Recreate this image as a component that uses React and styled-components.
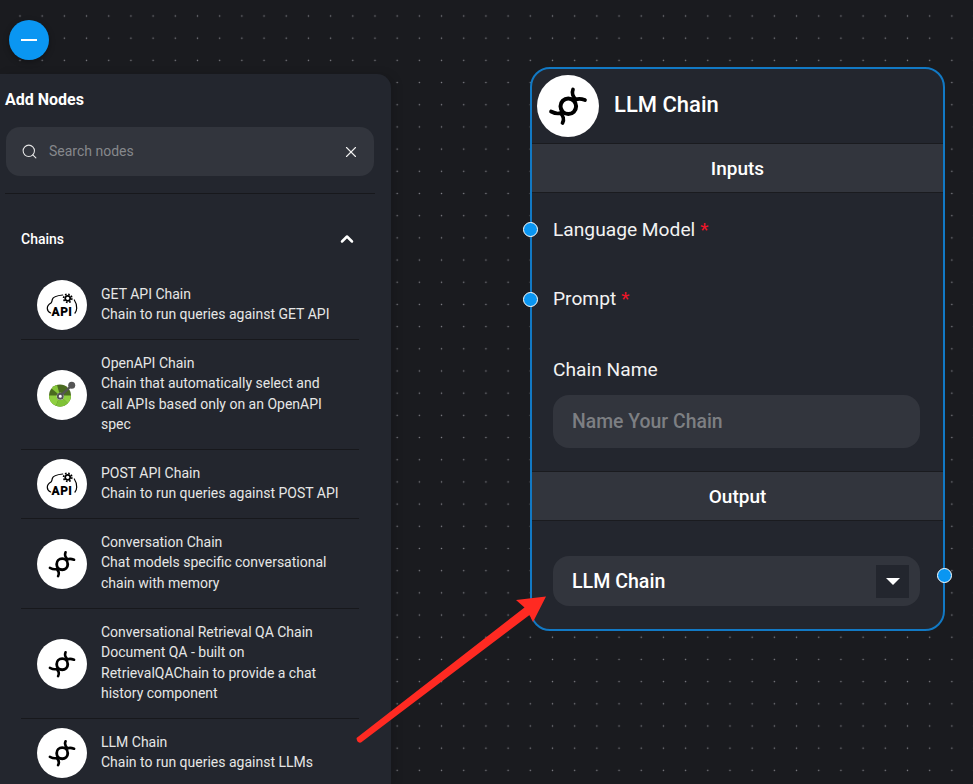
import styled, { createGlobalStyle } from "styled-components";
import { ChevronUp, Search, X } from "lucide-react";

const GlobalStyle = createGlobalStyle`
  html, body {
    margin: 0;
    padding: 0;
    background: #1a1b1f;
    font-family: Roboto, "Liberation Sans", sans-serif;
    overflow: hidden;
  }
  * {
    box-sizing: border-box;
  }
`;

const chains = [
  { id: 1, icon: "api", title: "GET API Chain", desc: ["Chain to run queries against GET API"], height: 69 },
  {
    id: 2,
    icon: "openapi",
    title: "OpenAPI Chain",
    desc: ["Chain that automatically select and", "call APIs based only on an OpenAPI", "spec"],
    height: 110,
  },
  { id: 3, icon: "api", title: "POST API Chain", desc: ["Chain to run queries against POST API"], height: 69 },
  {
    id: 4,
    icon: "chain",
    title: "Conversation Chain",
    desc: ["Chat models specific conversational", "chain with memory"],
    height: 90,
  },
  {
    id: 5,
    icon: "chain",
    title: "Conversational Retrieval QA Chain",
    desc: ["Document QA - built on", "RetrievalQAChain to provide a chat", "history component"],
    height: 110,
  },
  { id: 6, icon: "chain", title: "LLM Chain", desc: ["Chain to run queries against LLMs"], height: 69 },
];

const ChainGlyph = ({ size }) => (
  <svg width={size} height={size} viewBox="2 2 62 62" fill="none" stroke="#000" strokeLinecap="round">
    <circle cx="33.3" cy="33.3" r="7.8" strokeWidth="4" />
    <path
      d="M38 16.5C36.5 20 38 24 41 26.5M50 27C46 25.5 43 25.5 41 26.5M16 38.5C20 40.5 23 41 25.5 40M27.5 50C29.5 46.5 28 42.5 25.5 40"
      strokeWidth="3.7"
    />
  </svg>
);

const ApiGlyph = () => (
  <svg width="36" height="36" viewBox="0 0 36 36" fill="none" stroke="#000">
    <path d="M18.7 8C13 8.5 9 10 8.3 12.5C8 14.5 8 15 7 16C4.5 17.5 3.2 19.5 3.3 21.5C3.4 23.5 4.8 25.2 6.7 26" strokeWidth="1.2" strokeLinecap="round" />
    <path d="M30.3 13C32 15.5 32.9 18.5 32.7 21.3C32.6 23.2 32 25 31 26" strokeWidth="1.2" strokeLinecap="round" />
    <circle cx="23.7" cy="11.3" r="2.5" strokeWidth="1.7" />
    <circle cx="23.7" cy="11.3" r="4.1" strokeWidth="1.7" strokeDasharray="1.6 1.62" />
    <ApiLabel x="18" y="29" textAnchor="middle">API</ApiLabel>
  </svg>
);

const OpenApiGlyph = () => (
  <svg width="36" height="36" viewBox="0 0 36 36" fill="none">
    <circle cx="16" cy="18.5" r="11" fill="#4a6b20" />
    <path d="M16 18.5L5 18.5A11 11 0 0 0 12 28.8Z" fill="#8fd040" />
    <path d="M16 18.5L12 28.8A11 11 0 0 0 23.8 26.3Z" fill="#7fc236" />
    <path d="M16 18.5L23.8 26.3A11 11 0 0 0 27 18.5Z" fill="#8fd040" />
    <path d="M16 18.5L7.5 11.5A11 11 0 0 1 13 8Z" fill="#86c63a" />
    <circle cx="16.3" cy="19.3" r="3.6" fill="#fff" />
    <circle cx="16.3" cy="19.3" r="2.5" fill="#fff" stroke="#555" strokeWidth="2" />
    <path d="M18.2 17.4L26.5 9.5" stroke="#555" strokeWidth="2.4" />
    <circle cx="27.7" cy="8.3" r="3.5" fill="#555" />
  </svg>
);

const iconFor = (name) => {
  if (name === "api") return <ApiGlyph />;
  if (name === "openapi") return <OpenApiGlyph />;
  return <ChainGlyph size={44} />;
};

const App = () => {
  return (
    <>
      <GlobalStyle />
      <Canvas>
        <ToggleButton aria-label="Collapse">
          <Dash />
        </ToggleButton>

        <AddPanel>
          <PanelTitle>Add Nodes</PanelTitle>
          <SearchBox>
            <Search size={17} strokeWidth={1.5} color="#e6e6e6" />
            <SearchText>Search nodes</SearchText>
            <X size={18} strokeWidth={1.5} color="#f2f2f2" />
          </SearchBox>
          <PanelDivider />
          <GroupHeader>
            <span>Chains</span>
            <ChevronUp size={20} strokeWidth={3} color="#fff" />
          </GroupHeader>
          <ChainList>
            {chains.map(({ id, icon, title, desc, height }) => (
              <ChainRow key={id} $height={height}>
                <ChainAvatar>{iconFor(icon)}</ChainAvatar>
                <ChainText>
                  <ChainTitle>{title}</ChainTitle>
                  {desc.map((line) => (
                    <ChainDesc key={line}>{line}</ChainDesc>
                  ))}
                </ChainText>
              </ChainRow>
            ))}
          </ChainList>
        </AddPanel>

        <NodeCard>
          <NodeHeader>
            <NodeAvatar>
              <ChainGlyph size={62} />
            </NodeAvatar>
            <NodeTitle>LLM Chain</NodeTitle>
          </NodeHeader>

          <SectionBar>Inputs</SectionBar>
          <InputsBody>
            <AnchorRow>
              <Handle $top={27} />
              Language Model <Required>*</Required>
            </AnchorRow>
            <AnchorRow>
              <Handle $top={28} />
              Prompt <Required>*</Required>
            </AnchorRow>
            <FieldLabel>Chain Name</FieldLabel>
            <NameField>Name Your Chain</NameField>
          </InputsBody>

          <SectionBar>Output</SectionBar>
          <OutputBody>
            <SelectField>
              LLM Chain
              <CaretBox>
                <Caret />
              </CaretBox>
            </SelectField>
            <OutputHandle />
          </OutputBody>
        </NodeCard>

        <ArrowOverlay width="973" height="784" viewBox="0 0 973 784">
          <path
            d="M356.5 738L524.5 607.5L516 600L546 596.5L533 622L529.5 615L361 742.5Q357 743.5 356.5 738Z"
            fill="#ff2a22"
          />
        </ArrowOverlay>
      </Canvas>
    </>
  );
};

export default App;

const Canvas = styled.main`
  position: relative;
  width: 973px;
  height: 784px;
  overflow: hidden;
  background-color: #1a1b1f;
  background-image: radial-gradient(circle, #85858c 0.8px, transparent 1px);
  background-size: 22.2px 22.2px;
  background-position: 8.9px 4.9px;
`;

const ToggleButton = styled.button`
  position: absolute;
  left: 9px;
  top: 20px;
  display: flex;
  align-items: center;
  justify-content: center;
  width: 40px;
  height: 40px;
  padding: 0;
  border: none;
  border-radius: 50%;
  background: #0a96f2;
  box-shadow: 0 2px 6px rgba(0, 0, 0, 0.3);
`;

const Dash = styled.span`
  width: 16px;
  height: 2px;
  background: #fff;
`;

const AddPanel = styled.aside`
  position: absolute;
  left: 0;
  top: 74px;
  width: 391px;
  height: 710px;
  padding: 16px 16px 0 5px;
  overflow: hidden;
  border-radius: 0 14px 0 0;
  background: #23262e;
  box-shadow: 4px 0 10px rgba(0, 0, 0, 0.12);
`;

const PanelTitle = styled.h4`
  margin: 0;
  font-size: 16px;
  line-height: 19px;
  font-weight: 700;
  color: #fff;
`;

const SearchBox = styled.div`
  display: flex;
  align-items: center;
  width: 368px;
  height: 49px;
  margin: 18px 0 0 1px;
  padding: 0 14px 0 15px;
  border-radius: 14px;
  background: #32353d;
`;

const SearchText = styled.span`
  flex: 1;
  margin: -2px 0 0 11px;
  font-size: 14px;
  color: #86888c;
`;

const PanelDivider = styled.div`
  width: 370px;
  height: 1px;
  margin-top: 17px;
  background: #17181c;
`;

const GroupHeader = styled.div`
  display: flex;
  align-items: center;
  justify-content: space-between;
  width: 338px;
  height: 77px;
  margin-left: 16px;
  padding: 13px 2px 1px 0;
  font-size: 14px;
  font-weight: 500;
  color: #fff;
`;

const ChainList = styled.div`
  width: 338px;
  margin-left: 16px;
`;

const ChainRow = styled.div`
  display: flex;
  align-items: center;
  height: ${(props) => props.$height}px;
  padding-left: 16px;
  border-bottom: 1px solid #17181c;
`;

const ChainAvatar = styled.div`
  display: flex;
  flex: none;
  align-items: center;
  justify-content: center;
  width: 50px;
  height: 50px;
  border-radius: 50%;
  background: #fff;
`;

const ChainText = styled.div`
  margin-left: 14px;
  color: #e6e6e6;
`;

const ChainTitle = styled.div`
  font-size: 14px;
  line-height: 19px;
`;

const ChainDesc = styled.div`
  font-size: 14px;
  line-height: 20.6px;
`;

const ApiLabel = styled.text`
  font-family: Roboto, "Liberation Sans", sans-serif;
  font-size: 12px;
  font-weight: 900;
  letter-spacing: 0.4px;
  fill: #000;
  stroke: none;
`;

const NodeCard = styled.section`
  position: absolute;
  left: 530px;
  top: 67px;
  width: 415px;
  height: 564px;
  border: 2px solid #1279c4;
  border-radius: 20px;
  background: #23262e;
  color: #f2f2f2;
`;

const NodeHeader = styled.header`
  display: flex;
  align-items: center;
  height: 74px;
  padding-left: 5px;
`;

const NodeAvatar = styled.div`
  display: flex;
  align-items: center;
  justify-content: center;
  width: 62px;
  height: 62px;
  border-radius: 50%;
  background: #fff;
`;

const NodeTitle = styled.h4`
  margin: -3px 0 0 15px;
  font-size: 22px;
  font-weight: 500;
  color: #fff;
`;

const SectionBar = styled.div`
  display: flex;
  align-items: center;
  justify-content: center;
  height: 50px;
  border-top: 1px solid #1a1b1f;
  border-bottom: 1px solid #1a1b1f;
  background: #32353d;
  font-size: 19px;
  font-weight: 500;
  color: #fff;
`;

const InputsBody = styled.div`
  height: 278px;
  padding: 2px 23px 0 21px;
`;

const AnchorRow = styled.div`
  position: relative;
  display: flex;
  align-items: center;
  gap: 5px;
  height: 69px;
  font-size: 19.2px;
`;

const Required = styled.span`
  color: #f01528;
`;

const handleStyle = `
  position: absolute;
  width: 15px;
  height: 15px;
  border: 1.5px solid #fff;
  border-radius: 50%;
  background: #0a96f2;
`;

const Handle = styled.span`
  ${handleStyle}
  left: -30px;
  top: ${(props) => props.$top}px;
`;

const OutputHandle = styled.span`
  ${handleStyle}
  right: -9px;
  top: 47px;
`;

const FieldLabel = styled.div`
  margin-top: 26px;
  font-size: 19.2px;
  line-height: 22px;
`;

const NameField = styled.div`
  display: flex;
  align-items: center;
  height: 53px;
  margin-top: 14px;
  padding-left: 19px;
  border-radius: 16px;
  background: #32353d;
  font-size: 19.4px;
  font-weight: 500;
  color: #7d7f83;
`;

const OutputBody = styled.div`
  position: relative;
  padding: 35px 23px 0 21px;
`;

const SelectField = styled.div`
  display: flex;
  align-items: center;
  justify-content: space-between;
  height: 50px;
  padding: 0 11px 0 19px;
  border-radius: 16px;
  background: #32353d;
  font-size: 19.6px;
  font-weight: 500;
  color: #fff;
`;

const CaretBox = styled.div`
  display: flex;
  align-items: center;
  justify-content: center;
  width: 33px;
  height: 33px;
  background: #23262e;
`;

const Caret = styled.span`
  width: 0;
  height: 0;
  border-left: 7px solid transparent;
  border-right: 7px solid transparent;
  border-top: 7px solid #fff;
`;

const ArrowOverlay = styled.svg`
  position: absolute;
  left: 0;
  top: 0;
  pointer-events: none;
`;
